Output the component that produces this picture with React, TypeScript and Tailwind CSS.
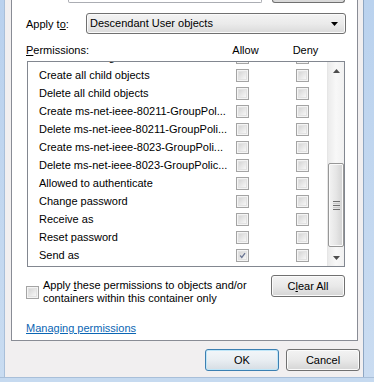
import React from 'react';

const rows = [
  { label: 'All extended rights', allow: false },
  { label: 'Create all child objects', allow: false },
  { label: 'Delete all child objects', allow: false },
  { label: 'Create ms-net-ieee-80211-GroupPol...', allow: false },
  { label: 'Delete ms-net-ieee-80211-GroupPoli...', allow: false },
  { label: 'Create ms-net-ieee-8023-GroupPoli...', allow: false },
  { label: 'Delete ms-net-ieee-8023-GroupPolic...', allow: false },
  { label: 'Allowed to authenticate', allow: false },
  { label: 'Change password', allow: false },
  { label: 'Receive as', allow: false },
  { label: 'Reset password', allow: false },
  { label: 'Send as', allow: true },
];

function Check({ checked = false }: { checked?: boolean }) {
  return (
    <div className="w-[13px] h-[13px] shrink-0 border border-[#a4a4a4] bg-[#f4f4f4] p-[1px]">
      <div className="w-full h-full border border-[#e2e2e2] bg-gradient-to-br from-[#d6d6d6] to-[#f7f7f7] relative">
        {checked && (
          <svg viewBox="0 0 9 9" className="absolute inset-0 w-full h-full">
            <path d="M1.5 4.5 L3.6 7 L7.8 1.3" fill="none" stroke="#6a7694" strokeWidth="1.6" />
          </svg>
        )}
      </div>
    </div>
  );
}

function Button({ children, primary = false, className = '' }: { children: React.ReactNode; primary?: boolean; className?: string }) {
  return (
    <div
      className={`h-[22px] w-[74px] rounded-[3px] border flex items-center justify-center text-black ${
        primary
          ? 'border-[#3c7fb1] shadow-[inset_0_0_0_1px_#bfe6f8] bg-gradient-to-b from-[#f2f6f9] via-[#e9eef2] to-[#d6dde3]'
          : 'border-[#707070] shadow-[inset_0_0_0_1px_#fbfbfb] bg-gradient-to-b from-[#f3f3f3] via-[#e9e9e9] to-[#d5d5d5]'
      } ${className}`}
    >
      {children}
    </div>
  );
}

export default function App() {
  return (
    <div className="w-[374px] h-[382px] overflow-hidden flex flex-col bg-[#c4d8ef] font-['Liberation_Sans',Arial,sans-serif] text-[11px] text-black leading-none">
      <div className="flex flex-1 min-h-0">
        {/* left frame */}
        <div className="w-[5px] bg-gradient-to-b from-[#b9d1ee] to-[#c9dcf1] border-r border-[#a9bfd9]" />

        {/* client area */}
        <div className="w-[358px] bg-[#f1eff0] flex flex-col">
          {/* tab panel */}
          <div className="ml-[6px] w-[347px] h-[341px] bg-white border-l border-r border-b border-[#898c95] flex flex-col">
            {/* bottom edges of controls scrolled above */}
            <div className="h-[3px] flex items-end">
              <div className="ml-[56px] w-[194px] h-[3px] border-l border-r border-b border-[#abadb3] rounded-b-[2px]" />
              <div className="ml-[10px] w-[73px] h-[3px] border-l border-r border-b border-[#707070] rounded-b-[3px] bg-[#d9d9d9]" />
            </div>

            {/* Apply to */}
            <div className="mt-[10px] flex items-center h-[21px]">
              <span className="ml-[14px] w-[60px] pt-[1px]">
                Apply t<span className="underline">o</span>:
              </span>
              <div className="w-[260px] h-[21px] rounded-[3px] border border-[#707070] shadow-[inset_0_0_0_1px_#fafafa] bg-gradient-to-b from-[#f3f3f3] via-[#ebebeb] to-[#dadada] flex items-center justify-between pl-[3px] pr-[7px]">
                <span>Descendant User objects</span>
                <svg width="7" height="4" viewBox="0 0 7 4">
                  <path d="M0 0 H7 L3.5 4 Z" fill="#000" />
                </svg>
              </div>
            </div>

            {/* Permissions header */}
            <div className="mt-[10px] h-[13px] flex items-center">
              <span className="ml-[14px] w-[204px]">
                <span className="underline">P</span>ermissions:
              </span>
              <span className="w-[31px] text-center">Allow</span>
              <span className="ml-[29px] w-[31px] text-center">Deny</span>
            </div>

            {/* list box */}
            <div className="mt-[4px] ml-[15px] w-[318px] h-[206px] border border-[#828790] flex">
              <div className="flex-1 overflow-hidden">
                <div className="-mt-[14px] flex flex-col">
                  {rows.map((r) => (
                    <div key={r.label} className="h-[18px] flex items-center">
                      <span className="w-[201px] pl-[11px] pt-[1px] whitespace-nowrap overflow-hidden">{r.label}</span>
                      <div className="ml-[7px]">
                        <Check checked={r.allow} />
                      </div>
                      <div className="ml-[47px]">
                        <Check />
                      </div>
                    </div>
                  ))}
                </div>
              </div>

              {/* scrollbar */}
              <div className="w-[17px] h-full flex flex-col border-l border-[#e6e6e6] bg-gradient-to-r from-[#ebebeb] via-[#f8f8f8] to-[#f1f1f1]">
                <div className="h-[17px] flex items-center justify-center">
                  <svg width="7" height="4" viewBox="0 0 7 4">
                    <path d="M0 4 H7 L3.5 0 Z" fill="#4d4d4d" />
                  </svg>
                </div>
                <div className="flex-1 flex flex-col">
                  <div className="h-[84px]" />
                  <div className="h-[84px] rounded-[2px] border border-[#979797] shadow-[inset_0_0_0_1px_#fafafa] bg-gradient-to-r from-[#f3f3f3] via-[#e6e6e6] to-[#d2d2d2] flex flex-col items-center justify-center gap-[1px]">
                    <div className="w-[7px] h-[1px] bg-[#6f6f6f]" />
                    <div className="w-[7px] h-[1px] bg-[#c8c8c8]" />
                    <div className="w-[7px] h-[1px] bg-[#6f6f6f]" />
                    <div className="w-[7px] h-[1px] bg-[#c8c8c8]" />
                    <div className="w-[7px] h-[1px] bg-[#6f6f6f]" />
                  </div>
                </div>
                <div className="h-[17px] flex items-center justify-center">
                  <svg width="7" height="4" viewBox="0 0 7 4">
                    <path d="M0 0 H7 L3.5 4 Z" fill="#4d4d4d" />
                  </svg>
                </div>
              </div>
            </div>

            {/* apply checkbox + clear all */}
            <div className="mt-[8px] flex items-start">
              <div className="ml-[14px] mt-[4px] w-[245px] flex items-center gap-[4px]">
                <Check />
                <div className="leading-[13px]">
                  <div>
                    Apply <span className="underline">t</span>hese permissions to objects and/or
                  </div>
                  <div>containers within this container only</div>
                </div>
              </div>
              <Button>
                C<span className="underline">l</span>ear All
              </Button>
            </div>

            <div className="mt-[18px] ml-[14px]">
              <span className="text-[#0b66b4] underline">Managing permissions</span>
            </div>
          </div>

          {/* dialog buttons */}
          <div className="mt-[8px] flex">
            <Button primary className="ml-[200px]">OK</Button>
            <Button className="ml-[7px]">Cancel</Button>
          </div>
        </div>

        {/* right frame */}
        <div className="flex-1 border-l border-[#8ea6c2] bg-gradient-to-b from-[#bad2ee] to-[#cadcf1]" />
      </div>
      {/* bottom frame */}
      <div className="h-[5px] bg-[#c6daf0] border-t border-[#a9bfd9]" />
    </div>
  );
}
